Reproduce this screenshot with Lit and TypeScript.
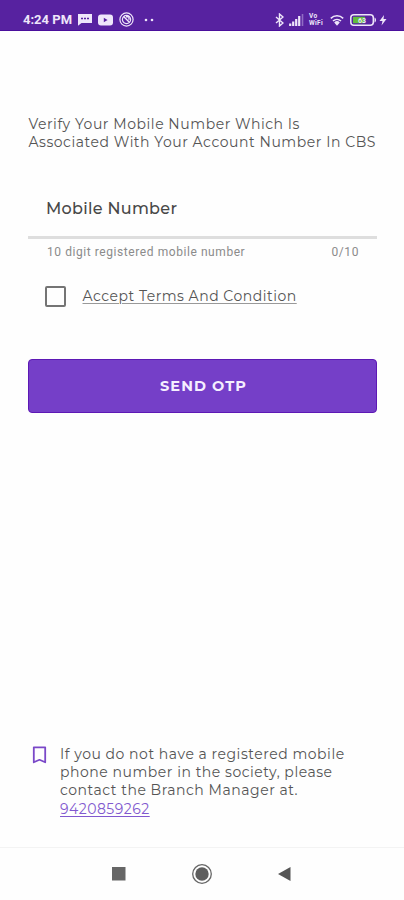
import { LitElement, html, css } from "lit";
import { customElement } from "lit/decorators.js";

@customElement("status-bar")
class StatusBar extends LitElement {
  static styles = css`
    :host {
      display: flex;
      align-items: flex-end;
      justify-content: space-between;
      box-sizing: border-box;
      height: 31px;
      padding: 0 17px 2px 23px;
      background: #5722a0;
      border-bottom: 1px solid #4a0f9c;
      color: #eee6fa;
    }
    .group { display: flex; align-items: center; height: 17px; }
    .time {
      font: 700 13px/17px Roboto, sans-serif;
      width: 49px;
      margin-right: 6px;
      white-space: nowrap;
    }
    svg { display: block; flex: none; }
    .chat { margin-right: 6px; }
    .tube { margin-right: 6px; }
    .ring { margin-right: 10px; }
    .bt { margin-right: 5px; }
    .signal { margin-right: 5px; }
    .vowifi {
      font: 700 6.5px/7px Roboto, sans-serif;
      letter-spacing: 0.3px;
      width: 15px;
      margin-right: 6px;
      white-space: nowrap;
    }
    .vowifi div { height: 7px; }
    .wifi { margin-right: 6px; }
    .battery { margin-right: 2px; }
    .level { font: 700 7px Roboto, sans-serif; }
  `;
  render() {
    return html`
      <div class="group">
        <span class="time">4:24 PM</span>
        <svg class="chat" width="14" height="13" viewBox="0 0 14 13">
          <path d="M0 1h14v9H3.5L0 12.7z" fill="#eee6fa" />
          <path d="M3 5.5h2M6 5.5h2M9 5.5h2" stroke="#5722a0" stroke-width="1.6" />
        </svg>
        <svg class="tube" width="15" height="12" viewBox="0 0 15 12">
          <rect y=".5" width="15" height="11" rx="3" fill="#eee6fa" />
          <path d="M5.8 3.8v4.4L9.6 6z" fill="#5722a0" />
        </svg>
        <svg class="ring" width="15" height="15" viewBox="0 0 15 15" fill="none" stroke="#eee6fa">
          <circle cx="7.5" cy="7.5" r="6.6" stroke-width="1.2" />
          <circle cx="7.5" cy="7.5" r="4.1" stroke-width="1.2" />
          <path d="M4.6 4.6l6 6M7 4.7h3v3" stroke-width="1.4" />
        </svg>
        <svg width="10" height="4" viewBox="0 0 10 4" fill="#eee6fa">
          <circle cx="2" cy="2" r="1.3" /><circle cx="8" cy="2" r="1.3" />
        </svg>
      </div>
      <div class="group">
        <svg class="bt" width="9" height="14" viewBox="0 0 9 14" fill="none" stroke="#eee6fa" stroke-width="1.4">
          <path d="M1 4l7 6-3.5 3V1L8 4l-7 6" />
        </svg>
        <svg class="signal" width="15" height="12" viewBox="0 0 15 12">
          <path d="M1.2 12V9.5M4.2 12V7.5M7.2 12V5M10.2 12V2" stroke="#eee6fa" stroke-width="2.2" />
          <path d="M13.5 12V0" stroke="#8f6cc4" stroke-width="1.6" />
        </svg>
        <div class="vowifi"><div>Vo</div><div>WiFi</div></div>
        <svg class="wifi" width="14" height="12" viewBox="0 0 14 12" fill="none" stroke="#eee6fa" stroke-width="1.6">
          <path d="M.8 4.3a9 9 0 0 1 12.4 0M3 7a6 6 0 0 1 8 0" />
          <path d="M4.2 8.4L7 11.8l2.8-3.4a4 4 0 0 0-5.6 0z" fill="#eee6fa" stroke="none" />
        </svg>
        <svg class="battery" width="27" height="12" viewBox="0 0 27 12">
          <rect x=".8" y=".8" width="22.5" height="10.4" rx="3" fill="none" stroke="#eee6fa" stroke-width="1.5" />
          <path d="M24.5 3.5c2 .5 2 4.5 0 5z" fill="#eee6fa" />
          <rect x="3" y="2.8" width="12" height="6.4" fill="#62bd3c" />
          <text class="level" x="8" y="8.5" fill="#eee6fa">63</text>
        </svg>
        <svg width="8" height="12" viewBox="0 0 8 12"><path d="M5 1L.5 7h3l-1 4.5 5-6.5h-3z" fill="#eee6fa" /></svg>
      </div>
    `;
  }
}

@customElement("nav-bar")
class NavBar extends LitElement {
  static styles = css`
    :host {
      display: flex;
      justify-content: center;
      align-items: center;
      gap: 63px;
      box-sizing: border-box;
      height: 53px;
      border-top: 1px solid #f3f3f3;
    }
    svg { display: block; }
  `;
  render() {
    return html`
      <svg width="18" height="22" viewBox="0 0 18 22"><rect x="2" y="4" width="13.5" height="13.5" fill="#666" /></svg>
      <svg width="22" height="22" viewBox="0 0 22 22">
        <circle cx="11" cy="11" r="9.3" fill="none" stroke="#666" stroke-width="1.3" />
        <circle cx="11" cy="11" r="6.7" fill="#5e5e5e" />
      </svg>
      <svg width="18" height="22" viewBox="0 0 18 22"><path d="M2 11L14.5 4v14z" fill="#555" /></svg>
    `;
  }
}

@customElement("app-root")
class AppRoot extends LitElement {
  static styles = css`
    :host {
      display: flex;
      flex-direction: column;
      height: 900px;
      background: #fefefe;
      color: #555;
      font-family: Montserrat, Inter, sans-serif;
    }
    main { display: flex; flex-direction: column; flex: 1; padding: 84px 27px 0 28px; }
    .line { display: block; white-space: nowrap; }
    .intro { padding-left: 0.5px; font-size: 14px; line-height: 18px; letter-spacing: 0.55px; }
    .field { height: 85px; box-sizing: border-box; padding: 45px 18px 0; border-bottom: 3px solid #dedede; margin-top: 3px; }
    .label { font-size: 16px; line-height: 20px; font-weight: 500; letter-spacing: 0.3px; color: #484848; }
    .helper { display: flex; justify-content: space-between; padding: 5px 18px 0 19px; font: 12px/16px Roboto, sans-serif; color: #8b8b8b; letter-spacing: 0.57px; }
    .terms { display: flex; align-items: center; margin: 25px 0 0 17px; height: 22px; }
    .box { box-sizing: border-box; width: 21px; height: 21px; border: 2px solid #747474; border-radius: 2px; margin-right: 16.5px; }
    .accept { font-size: 14px; line-height: 20px; letter-spacing: 0.52px; text-decoration: underline; text-decoration-color: #999; text-underline-offset: 2px; white-space: nowrap; }
    .send {
      margin: 52px 0 0;
      height: 54px;
      padding: 0 0 0 2px;
      border: 1px solid #5d18b5;
      border-radius: 4px;
      background: #753fc8;
      color: #f5efff;
      font: 700 14.5px/52px Montserrat, Inter, sans-serif;
      letter-spacing: 1.05px;
    }
    .note { display: flex; margin: auto 0 28px 4px; font-size: 14px; line-height: 18px; letter-spacing: 0.53px; }
    .mark { display: block; margin: 1px 13px 0 0; }
    .phone { margin-top: 1px; line-height: 19px; letter-spacing: 0.5px; color: #8158cf; text-decoration: underline; text-underline-offset: 2px; }
  `;
  render() {
    return html`
      <status-bar></status-bar>
      <main>
        <div class="intro">
          <span class="line">Verify Your Mobile Number Which Is</span>
          <span class="line">Associated With Your Account Number In CBS</span>
        </div>
        <div class="field"><span class="label">Mobile Number</span></div>
        <div class="helper"><span>10 digit registered mobile number</span><span>0/10</span></div>
        <div class="terms"><span class="box"></span><a class="accept">Accept Terms And Condition</a></div>
        <button class="send">SEND OTP</button>
        <div class="note">
          <svg class="mark" width="15" height="18" viewBox="0 0 15 18">
            <path d="M1.8 1.3h11.4v15l-5.7-2.5-5.7 2.5z" fill="none" stroke="#7a48c8" stroke-width="1.8" stroke-linejoin="round" />
          </svg>
          <div>
            <span class="line">If you do not have a registered mobile</span>
            <span class="line">phone number in the society, please</span>
            <span class="line">contact the Branch Manager at.</span>
            <a class="line phone">9420859262</a>
          </div>
        </div>
      </main>
      <nav-bar></nav-bar>
    `;
  }
}
